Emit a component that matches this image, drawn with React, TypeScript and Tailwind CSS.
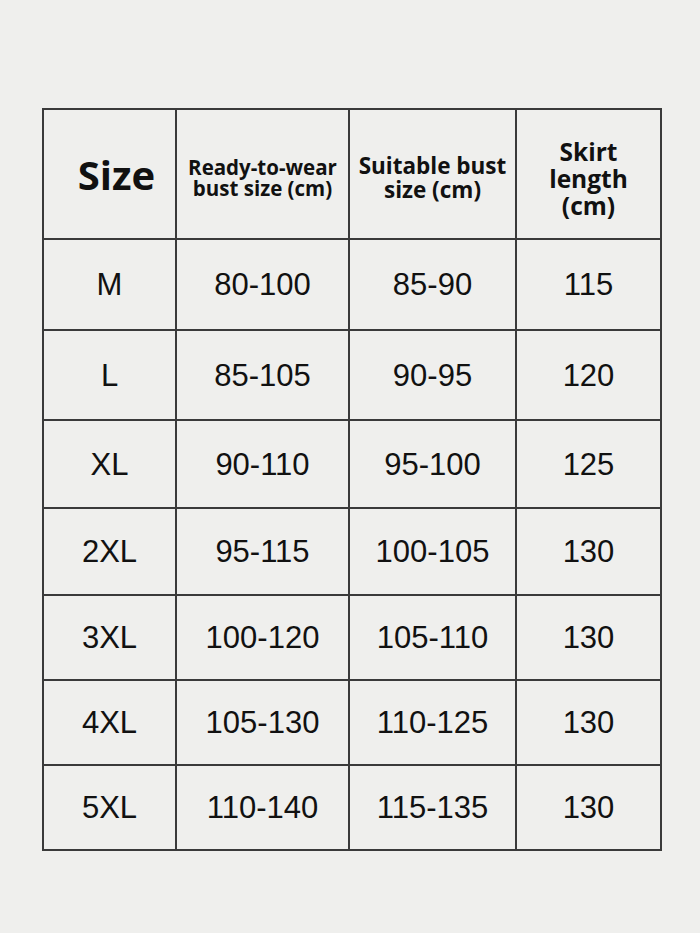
import React from "react";

const rows: [string, string, string, string][] = [
  ["M", "80-100", "85-90", "115"],
  ["L", "85-105", "90-95", "120"],
  ["XL", "90-110", "95-100", "125"],
  ["2XL", "95-115", "100-105", "130"],
  ["3XL", "100-120", "105-110", "130"],
  ["4XL", "105-130", "110-125", "130"],
  ["5XL", "110-140", "115-135", "130"],
];

const rowHeights = ["h-[89px]", "h-[88px]", "h-[86px]", "h-[85px]", "h-[83px]", "h-[83px]", "h-[83px]"];

export default function App() {
  return (
    <div className="min-h-[933px] w-[700px] bg-[#efefed] pt-[108px] pl-[42px]">
      <div className="grid w-[620px] grid-cols-[131px_171px_165px_143px] gap-[2px] bg-[#3a3a3a] p-[2px]">
        {/* Header */}
        <div className="flex h-[128px] items-center justify-center bg-[#efefed] pl-[14px] pt-[2px] font-['Open_Sans',sans-serif] text-[40px] font-bold leading-none text-[#111]">
          Size
        </div>
        <div className="flex h-[128px] items-center justify-center bg-[#efefed] pt-[8px] text-center font-['Open_Sans',sans-serif] text-[20.5px] font-bold leading-[21px] text-[#111]">
          <div>
            Ready-to-wear
            <br />
            bust size (cm)
          </div>
        </div>
        <div className="flex h-[128px] items-center justify-center bg-[#efefed] pt-[8px] text-center font-['Open_Sans',sans-serif] text-[22.5px] font-bold leading-[24px] text-[#111]">
          <div>
            Suitable bust
            <br />
            size (cm)
          </div>
        </div>
        <div className="flex h-[128px] items-center justify-center bg-[#efefed] pt-[8px] text-center font-['Open_Sans',sans-serif] text-[24.5px] font-bold leading-[27px] text-[#111]">
          <div>
            Skirt
            <br />
            length
            <br />
            (cm)
          </div>
        </div>
        {rows.map((r, i) =>
          r.map((c, j) => (
            <div
              key={`${i}-${j}`}
              className={`${rowHeights[i]} flex items-center justify-center bg-[#efefed] font-['Liberation_Sans',Arial,sans-serif] text-[31px] leading-none text-[#111]`}
            >
              {c}
            </div>
          ))
        )}
      </div>
    </div>
  );
}
